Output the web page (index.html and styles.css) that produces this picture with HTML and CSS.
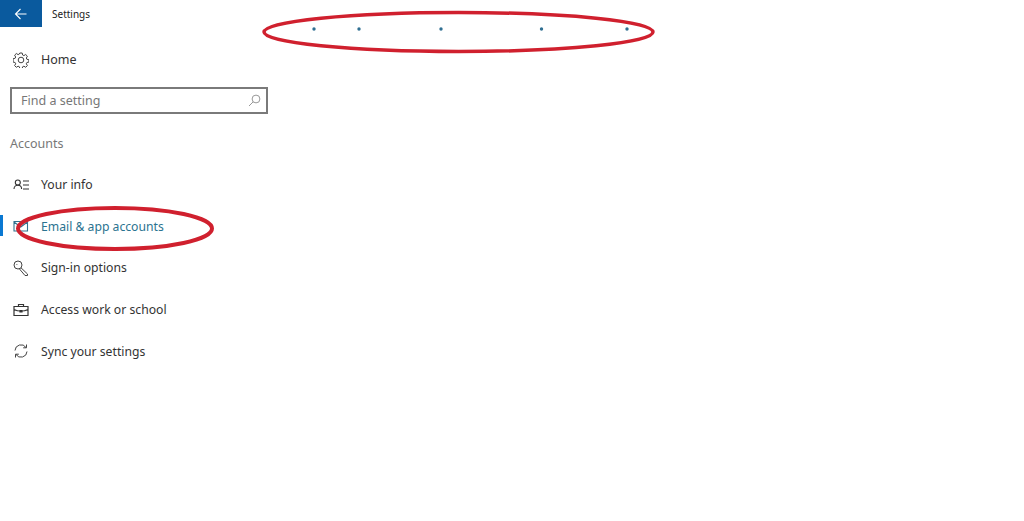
FILE: index.html
```html
<!DOCTYPE html>
<html>
<head>
  <title>Settings</title>
  <link rel="stylesheet" href="styles.css">
</head>
<body>

  <div class="sidebar">
    <div class="top-bar">
      <a class="back" href="#">
        <svg width="14" height="14" viewBox="0 0 14 14" fill="none" stroke="#fff" stroke-width="1.1">
          <path d="M12.5 7H1.5M6.5 2 1.5 7l5 5"/>
        </svg>
      </a>
      <span class="title">Settings</span>
    </div>

    <a class="nav-item home" href="#">
      <svg class="icon" viewBox="0 0 16 16" fill="none" stroke="#444" stroke-width="1">
        <path d="M6.8 1h2.400l.4 2 1.300.6 1.800-1.100 1.700 1.700-1.100 1.800.6 1.300 2 .4v2.400l-2 .4-.6 1.300 1.100 1.800-1.700 1.700-1.800-1.100-1.300.6-.4 2H6.800l-.4-2-1.300-.6-1.800 1.100-1.700-1.700 1.100-1.800-.6-1.300-2-.4V6.700l2-.4.6-1.300-1.100-1.800 1.700-1.700 1.800 1.100 1.300-.6z"/>
        <circle cx="8" cy="8" r="2.800"/>
      </svg>
      <span>Home</span>
    </a>

    <div class="search">
      <span>Find a setting</span>
      <svg width="13" height="13" viewBox="0 0 13 13" fill="none" stroke="#999" stroke-width="1">
        <circle cx="8" cy="5" r="3.900"/>
        <path d="M5.200 7.800 1 12"/>
      </svg>
    </div>

    <div class="section">Accounts</div>

    <a class="nav-item" href="#">
      <svg class="icon" viewBox="0 0 16 16" fill="none" stroke="#333" stroke-width="1.100">
        <circle cx="4.800" cy="5.500" r="2.500"/>
        <path d="M1 12c0-5 7.600-5 7.600 0M10 4h6M10 8h6M10 12h6"/>
      </svg>
      <span>Your info</span>
    </a>
    <a class="nav-item active" href="#">
      <svg class="icon" viewBox="0 0 16 16" fill="none" stroke="#33728f" stroke-width="1.100">
        <path d="M1 3.500h13.500v9.500H1zM1 4l6.700 5L14.500 4"/>
      </svg>
      <span>Email &amp; app accounts</span>
    </a>
    <a class="nav-item" href="#">
      <svg class="icon" viewBox="0 0 16 16" fill="none" stroke="#444" stroke-width="1">
        <circle cx="5" cy="5" r="4"/>
        <path d="M8 7.800 14.500 14v1.500h-2.500L6.500 9M3.500 4.500h.8"/>
      </svg>
      <span>Sign-in options</span>
    </a>
    <a class="nav-item" href="#">
      <svg class="icon" viewBox="0 0 16 16" fill="none" stroke="#333" stroke-width="1.200">
        <path d="M1 4.500h14v9H1zM5.500 4.500V2.500h5v2M1 7.500c4 2 10 2 14 0"/>
        <path d="M7 8.500h2v1.500H7z" fill="#333"/>
      </svg>
      <span>Access work or school</span>
    </a>
    <a class="nav-item" href="#">
      <svg class="icon" viewBox="0 0 16 16" fill="none" stroke="#444" stroke-width="1">
        <path d="M2 7.500A6 6 0 0 1 13 4.500M13.500 1.500v3.300h-3.300M14 8.500A6 6 0 0 1 3 11.500M2.500 14.500v-3.300h3.300"/>
      </svg>
      <span>Sync your settings</span>
    </a>
  </div>

  <!-- red marks drawn on top of the screenshot -->
  <svg class="marks" width="1024" height="521" viewBox="0 0 1024 521" fill="none" stroke="#d0202e" stroke-width="3.500">
    <ellipse cx="458.500" cy="32" rx="194.500" ry="19.500"/>
    <ellipse cx="115" cy="228.500" rx="97" ry="20.500" stroke-width="4"/>
    <g fill="#2f6f92" stroke="none">
      <circle cx="314" cy="29" r="1.700"/>
      <circle cx="359" cy="29" r="1.700"/>
      <circle cx="441" cy="29" r="1.700"/>
      <circle cx="541.500" cy="29" r="1.700"/>
      <circle cx="627" cy="29" r="1.700"/>
    </g>
  </svg>

</body>
</html>
```

FILE: styles.css
```css
html, body { height: 100%; }
body {
  margin: 0;
  overflow: hidden;
  background: #fff;
  color: #333;
  font-family: "Noto Sans", "Open Sans", sans-serif;
}
a { color: inherit; text-decoration: none; }

.sidebar {
  width: 278px;
  display: flex;
  flex-direction: column;
}

.top-bar {
  display: flex;
  align-items: center;
  height: 27px;
}
.back {
  width: 42px;
  height: 27px;
  background: #0a5a9e;
  display: flex;
  align-items: center;
  justify-content: center;
  margin-right: 10px;
}
.title { font-size: 10px; color: #222; }

.nav-item {
  display: flex;
  align-items: center;
  height: 41.700px;
  padding-left: 13px;
  font-size: 12.200px;
  position: relative;
}
.nav-item .icon {
  width: 16px;
  height: 16px;
  margin-right: 12px;
  flex-shrink: 0;
}
.home { margin-top: 12px; font-size: 12.500px; }
.active { color: #2b7390; }
.active::before {
  content: "";
  position: absolute;
  left: 0;
  top: 10px;
  width: 3px;
  height: 21px;
  background: #0a78d2;
}

.search {
  display: flex;
  align-items: center;
  justify-content: space-between;
  box-sizing: border-box;
  width: 258px;
  height: 27px;
  margin: 6px 0 0 10px;
  padding: 0 5px 0 9px;
  border: 2px solid #7a7a7a;
  font-size: 12.500px;
  color: #777;
}

.section {
  margin: 20px 0 10px 10px;
  height: 20px;
  line-height: 20px;
  font-size: 12.500px;
  color: #777;
}

.marks {
  position: absolute;
  left: 0;
  top: 0;
  pointer-events: none;
}
```
